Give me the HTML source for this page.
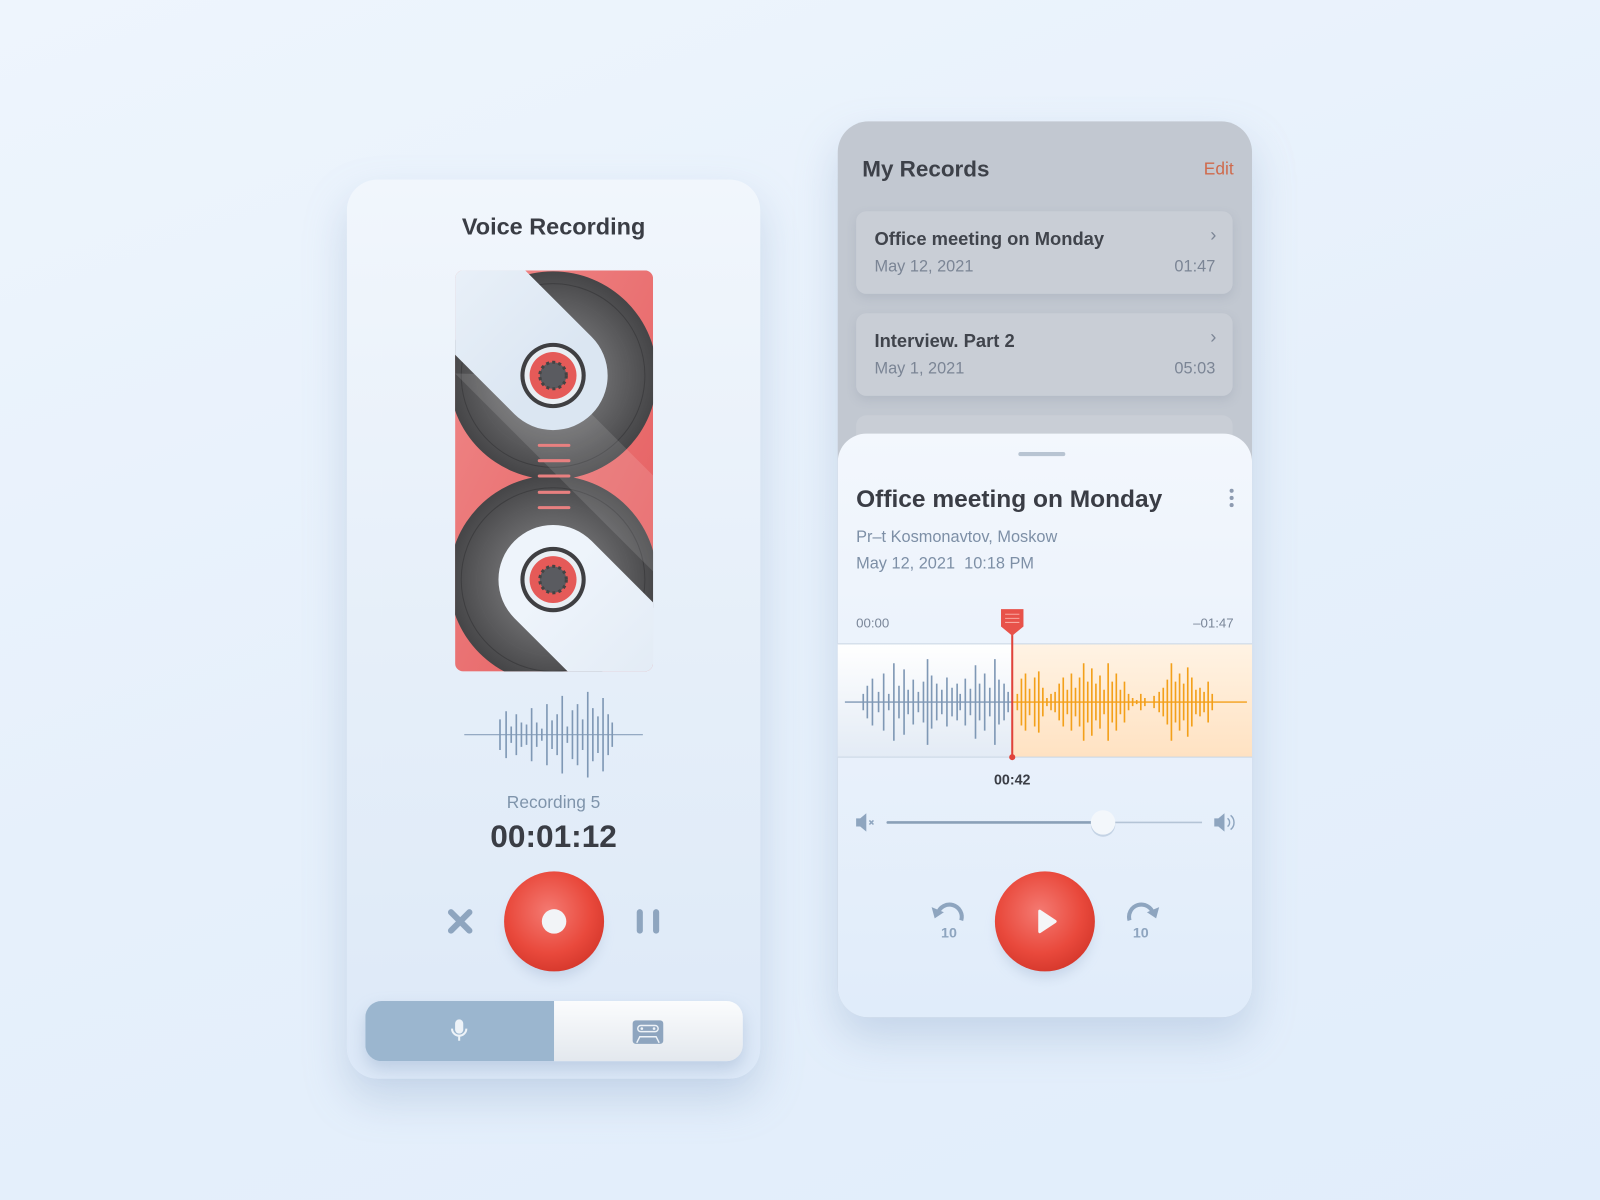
<!DOCTYPE html>
<html><head><meta charset="utf-8"><style>
*{margin:0;padding:0;box-sizing:border-box}
html,body{width:1600px;height:1200px;overflow:hidden}
body{background:linear-gradient(160deg,#eef5fd 0%,#e6f0fb 50%,#e1edfb 100%);font-family:"Liberation Sans","DejaVu Sans",sans-serif}
#w{position:absolute;left:0;top:0;width:1568px;height:1176px;transform:scale(1.0204);transform-origin:0 0}
.a{position:absolute}
.card{position:absolute;border-radius:30px;overflow:hidden}
.t{position:absolute;white-space:nowrap}
</style></head><body><div id="w">

<div class="card" style="left:340px;top:176px;width:405px;height:881px;background:linear-gradient(180deg,#f1f6fc 0%,#e6eff9 50%,#dde9f8 100%);box-shadow:0 20px 40px rgba(140,165,200,.35)"></div>
<div class="t" style="left:340px;width:405px;text-align:center;top:209px;font-size:23px;font-weight:bold;color:#3a3d45">Voice Recording</div>

<svg class="a" style="left:0;top:0" width="1568" height="1176">
<defs>
<clipPath id="cc"><rect x="446" y="265" width="194" height="393" rx="8"/></clipPath>
<radialGradient id="disc" cx="50%" cy="50%" r="50%"><stop offset="0.5" stop-color="#6a6a6c"/><stop offset="1" stop-color="#454547"/></radialGradient>
<linearGradient id="red" x1="0" y1="0" x2="1" y2="1"><stop offset="0" stop-color="#f08a8a"/><stop offset="1" stop-color="#e45a5c"/></linearGradient>
<radialGradient id="rb" cx="45%" cy="40%" r="60%"><stop offset="0" stop-color="#f47a72"/><stop offset="0.7" stop-color="#e9493c"/><stop offset="1" stop-color="#d83a2e"/></radialGradient>
<linearGradient id="wv" x1="0" y1="0" x2="0" y2="1"><stop offset="0" stop-color="#ffffff"/><stop offset="1" stop-color="#e3ebf5"/></linearGradient>
<linearGradient id="ov" x1="0" y1="0" x2="0" y2="1"><stop offset="0" stop-color="#fff3e4"/><stop offset="1" stop-color="#ffe2c2"/></linearGradient>
<linearGradient id="band" x1="0" y1="0" x2="1" y2="1"><stop offset="0" stop-color="#eef4fb"/><stop offset="1" stop-color="#dbe6f2"/></linearGradient>
</defs>
<g clip-path="url(#cc)">
<rect x="446" y="265" width="194" height="393" fill="url(#red)"/>
<circle cx="542" cy="368" r="102" fill="url(#disc)"/>
<circle cx="542" cy="368" r="90" fill="none" stroke="#3e3e40" stroke-width="1"/>
<circle cx="542" cy="368" r="75" fill="none" stroke="#5a5a5c" stroke-width="1"/>
<circle cx="542" cy="568" r="102" fill="url(#disc)"/>
<circle cx="542" cy="568" r="90" fill="none" stroke="#3e3e40" stroke-width="1"/>
<circle cx="542" cy="568" r="75" fill="none" stroke="#5a5a5c" stroke-width="1"/>
<path d="M542 368L640 466L640 560L446 366Z" fill="rgba(255,255,255,.12)"/>
<line x1="400" y1="226" x2="542" y2="368" stroke="url(#band)" stroke-width="107" stroke-linecap="round"/>
<line x1="542" y1="568" x2="700" y2="726" stroke="url(#band)" stroke-width="107" stroke-linecap="round"/>
<g fill="#e88080"><rect x="527" y="435" width="32" height="3" rx="1.5"/><rect x="527" y="450" width="32" height="3" rx="1.5"/><rect x="527" y="465" width="32" height="3" rx="1.5"/><rect x="527" y="481" width="32" height="3" rx="1.5"/><rect x="527" y="496" width="32" height="3" rx="1.5"/></g>
</g>
<g><circle cx="542" cy="368" r="32" fill="#3f3f42"/><circle cx="542" cy="368" r="28" fill="#e9eef3"/><circle cx="542" cy="368" r="23" fill="#e55a58"/><circle cx="542" cy="368" r="13" fill="#5a5b60" stroke="#444" stroke-width="3" stroke-dasharray="3 3"/></g>
<g><circle cx="542" cy="568" r="32" fill="#3f3f42"/><circle cx="542" cy="568" r="28" fill="#e9eef3"/><circle cx="542" cy="568" r="23" fill="#e55a58"/><circle cx="542" cy="568" r="13" fill="#5a5b60" stroke="#444" stroke-width="3" stroke-dasharray="3 3"/></g>

<line x1="455" y1="720" x2="630" y2="720" stroke="#8aa1bb" stroke-width="1.2"/>
<path stroke="#7f98b5" stroke-width="1.6" fill="none" d="M490 705V735M496 697V743M501 712V728M506 700V740M511 708V732M516 710V730M521 694V746M526 708V732M531 714V726M536 690V750M541 706V734M546 700V740M551 682V758M556 712V728M561 696V744M566 690V750M571 705V735M576 678V762M581 694V746M586 702V738M591 684V756M596 700V740M600 708V732"/>

<path d="M442 894L460 912M460 894L442 912" stroke="#8ea5bf" stroke-width="6" stroke-linecap="round"/>
<rect x="624" y="891" width="6" height="24" rx="3" fill="#8ea5bf"/><rect x="640" y="891" width="6" height="24" rx="3" fill="#8ea5bf"/>
<circle cx="543" cy="912" r="46" fill="rgba(150,170,200,.35)" filter="blur(6px)"/>
<circle cx="543" cy="903" r="49" fill="url(#rb)"/>
<circle cx="543" cy="903" r="12" fill="#f2f4f7"/>
</svg>

<div class="t" style="left:340px;width:405px;text-align:center;top:777px;font-size:17px;color:#7f94ab">Recording 5</div>
<div class="t" style="left:340px;width:405px;text-align:center;top:802px;font-size:31px;font-weight:bold;color:#3a3d45">00:01:12</div>

<div class="a" style="left:358px;top:981px;width:370px;height:59px;border-radius:16px;overflow:hidden;box-shadow:0 8px 16px rgba(130,155,190,.35)">
<div class="a" style="left:0;top:0;width:185px;height:59px;background:#9bb6cf"></div>
<div class="a" style="left:185px;top:0;width:185px;height:59px;background:linear-gradient(180deg,#fbfcfd,#e3e8ee)"></div>
<svg class="a" style="left:0;top:0" width="370" height="59">
<rect x="88" y="18" width="8" height="14" rx="4" fill="#eef3f8"/>
<path d="M85 27a7 7 0 0 0 14 0M92 34v5" stroke="#eef3f8" stroke-width="2" fill="none"/>
<rect x="262" y="19" width="30" height="23" rx="3" fill="#8ea5bf"/>
<rect x="267" y="24" width="20" height="6" rx="3" fill="none" stroke="#eef3f8" stroke-width="1.4"/>
<circle cx="271" cy="27" r="1.3" fill="#eef3f8"/><circle cx="283" cy="27" r="1.3" fill="#eef3f8"/>
<path d="M266 41l3-6h16l3 6" fill="none" stroke="#eef3f8" stroke-width="1.4"/>
</svg>
</div>

<div class="card" style="left:821px;top:119px;width:406px;height:878px;background:#c2c8d1;box-shadow:0 20px 40px rgba(140,165,200,.35)">
<div class="t" style="left:24px;top:34px;font-size:22px;font-weight:bold;color:#3d4149">My Records</div>
<div class="t" style="right:18px;top:37px;font-size:17px;color:#cf6a4c">Edit</div>
<div class="a" style="left:18px;top:88px;width:369px;height:81px;border-radius:10px;background:#c9ced6;box-shadow:0 4px 10px rgba(120,130,150,.2)">
<div class="t" style="left:18px;top:17px;font-size:18px;font-weight:bold;color:#40444c">Office meeting on Monday</div>
<div class="t" style="left:18px;top:46px;font-size:16px;color:#7b8595">May 12, 2021</div>
<div class="t" style="right:17px;top:46px;font-size:16px;color:#7b8595">01:47</div>
<div class="t" style="right:16px;top:13px;font-size:18px;color:#7b8595">›</div></div>
<div class="a" style="left:18px;top:188px;width:369px;height:81px;border-radius:10px;background:#c9ced6;box-shadow:0 4px 10px rgba(120,130,150,.2)">
<div class="t" style="left:18px;top:17px;font-size:18px;font-weight:bold;color:#40444c">Interview. Part 2</div>
<div class="t" style="left:18px;top:46px;font-size:16px;color:#7b8595">May 1, 2021</div>
<div class="t" style="right:17px;top:46px;font-size:16px;color:#7b8595">05:03</div>
<div class="t" style="right:16px;top:13px;font-size:18px;color:#7b8595">›</div></div>
<div class="a" style="left:18px;top:288px;width:369px;height:81px;border-radius:10px;background:#c9ced6"></div>

<div class="a" style="left:0;top:306px;width:406px;height:572px;border-radius:28px 28px 0 0;background:linear-gradient(180deg,#f3f7fd,#e9f1fb 50%,#e0ecfa)">
<div class="a" style="left:177px;top:18px;width:46px;height:4px;border-radius:2px;background:#b8c4d2"></div>
<div class="t" style="left:18px;top:51px;font-size:24px;font-weight:bold;color:#3a3d45">Office meeting on Monday</div>
<div class="a" style="left:384px;top:54px;width:4px;height:4px;border-radius:2px;background:#8d9bb0;box-shadow:0 7px 0 #8d9bb0,0 14px 0 #8d9bb0"></div>
<div class="t" style="left:18px;top:93px;font-size:16px;color:#7d8fa6">Pr–t Kosmonavtov, Moskow</div>
<div class="t" style="left:18px;top:119px;font-size:16px;color:#7d8fa6">May 12, 2021 &nbsp;10:18 PM</div>
<div class="t" style="left:18px;top:178px;font-size:13px;color:#7a8699">00:00</div>
<div class="t" style="right:18px;top:178px;font-size:13px;color:#7a8699">–01:47</div>
<div class="t" style="left:131px;width:80px;text-align:center;top:331px;font-size:14px;font-weight:bold;color:#3a3d45">00:42</div>
</div>
</div>

<svg class="a" style="left:0;top:0" width="1568" height="1176">
<rect x="821" y="631" width="171" height="111" fill="url(#wv)"/>
<rect x="992" y="631" width="235" height="111" fill="url(#ov)"/>
<line x1="821" y1="631" x2="1227" y2="631" stroke="#c9d5e3"/>
<line x1="821" y1="742" x2="1227" y2="742" stroke="#c9d5e3"/>
<line x1="828" y1="688" x2="992" y2="688" stroke="#7f98b5" stroke-width="1.3"/>
<line x1="992" y1="688" x2="1222" y2="688" stroke="#f3a01a" stroke-width="1.3"/>
<path stroke="#7f98b5" stroke-width="1.6" fill="none" d="M846 680V696M850 672V704M855 665V711M861 678V698M866 660V716M871 680V696M876 650V726M881 672V704M886 656V720M890 676V700M895 666V710M900 678V698M905 668V708M909 646V730M913 662V714M918 670V706M923 676V700M928 664V712M933 674V702M938 670V706M941 680V696M946 665V711M951 675V701M956 652V724M960 670V706M965 660V716M970 674V702M975 646V730M979 666V710M984 670V706M988 678V698"/>
<path stroke="#f3a01a" stroke-width="1.6" fill="none" d="M997 680V696M1001 665V711M1005 660V716M1009 675V701M1014 664V712M1018 658V718M1022 674V702M1026 684V692M1030 680V696M1034 678V698M1038 670V706M1042 664V712M1046 676V700M1050 660V716M1054 674V702M1058 664V712M1062 650V726M1066 668V708M1070 655V721M1074 670V706M1078 662V714M1082 676V700M1086 650V726M1090 668V708M1094 660V716M1098 676V700M1102 668V708M1106 680V696M1110 684V692M1114 686V690M1118 680V696M1122 684V692M1131 682V694M1136 678V698M1140 674V702M1144 666V710M1148 650V726M1152 668V708M1156 660V716M1160 670V706M1164 654V722M1168 664V712M1172 676V700M1176 674V702M1180 678V698M1184 668V708M1188 680V696"/>
<line x1="992" y1="612" x2="992" y2="742" stroke="#e0433a" stroke-width="2"/>
<circle cx="992" cy="742" r="3" fill="#e0433a"/>
<path d="M981 597h22v17l-11 9l-11-9z" fill="#e8524a"/>
<path d="M985 602h14M985 606h14M985 610h14" stroke="#f8a8a0" stroke-width="1"/>

<path d="M839 802h4l6-5v18l-6-5h-4z" fill="#8ea5bf"/>
<path d="M852 804l4 4M856 804l-4 4" stroke="#8ea5bf" stroke-width="1.5"/>
<line x1="870" y1="806" x2="1081" y2="806" stroke="#8aa0b8" stroke-width="2.5" stroke-linecap="round"/>
<line x1="1081" y1="806" x2="1178" y2="806" stroke="#b4c4d6" stroke-width="1.5"/>
<circle cx="1081" cy="808" r="12" fill="rgba(120,145,180,.3)"/>
<circle cx="1081" cy="806" r="12" fill="#f3f7fb"/>
<path d="M1190 802h4l6-5v18l-6-5h-4z" fill="#8ea5bf"/>
<path d="M1203 802a5 5 0 0 1 0 8M1206 799a9 9 0 0 1 0 14" stroke="#8ea5bf" stroke-width="1.4" fill="none"/>

<circle cx="1024" cy="912" r="46" fill="rgba(150,170,200,.35)" filter="blur(6px)"/>
<circle cx="1024" cy="903" r="49" fill="url(#rb)"/>
<path d="M1019 893l15 10l-15 10z" fill="#f5f6f8" stroke="#f5f6f8" stroke-width="3" stroke-linejoin="round"/>
<path d="M942 902a12 12 0 0 0-23-7" stroke="#8ea5bf" stroke-width="4" fill="none"/>
<path d="M913 889l3 11l9-6z" fill="#8ea5bf"/>
<path d="M1107 902a12 12 0 0 1 23-7" stroke="#8ea5bf" stroke-width="4" fill="none"/>
<path d="M1136 889l-3 11l-9-6z" fill="#8ea5bf"/>
<text x="930" y="919" text-anchor="middle" font-family="Liberation Sans" font-weight="bold" font-size="14" fill="#8ea5bf">10</text>
<text x="1118" y="919" text-anchor="middle" font-family="Liberation Sans" font-weight="bold" font-size="14" fill="#8ea5bf">10</text>
</svg>
</div></body></html>
